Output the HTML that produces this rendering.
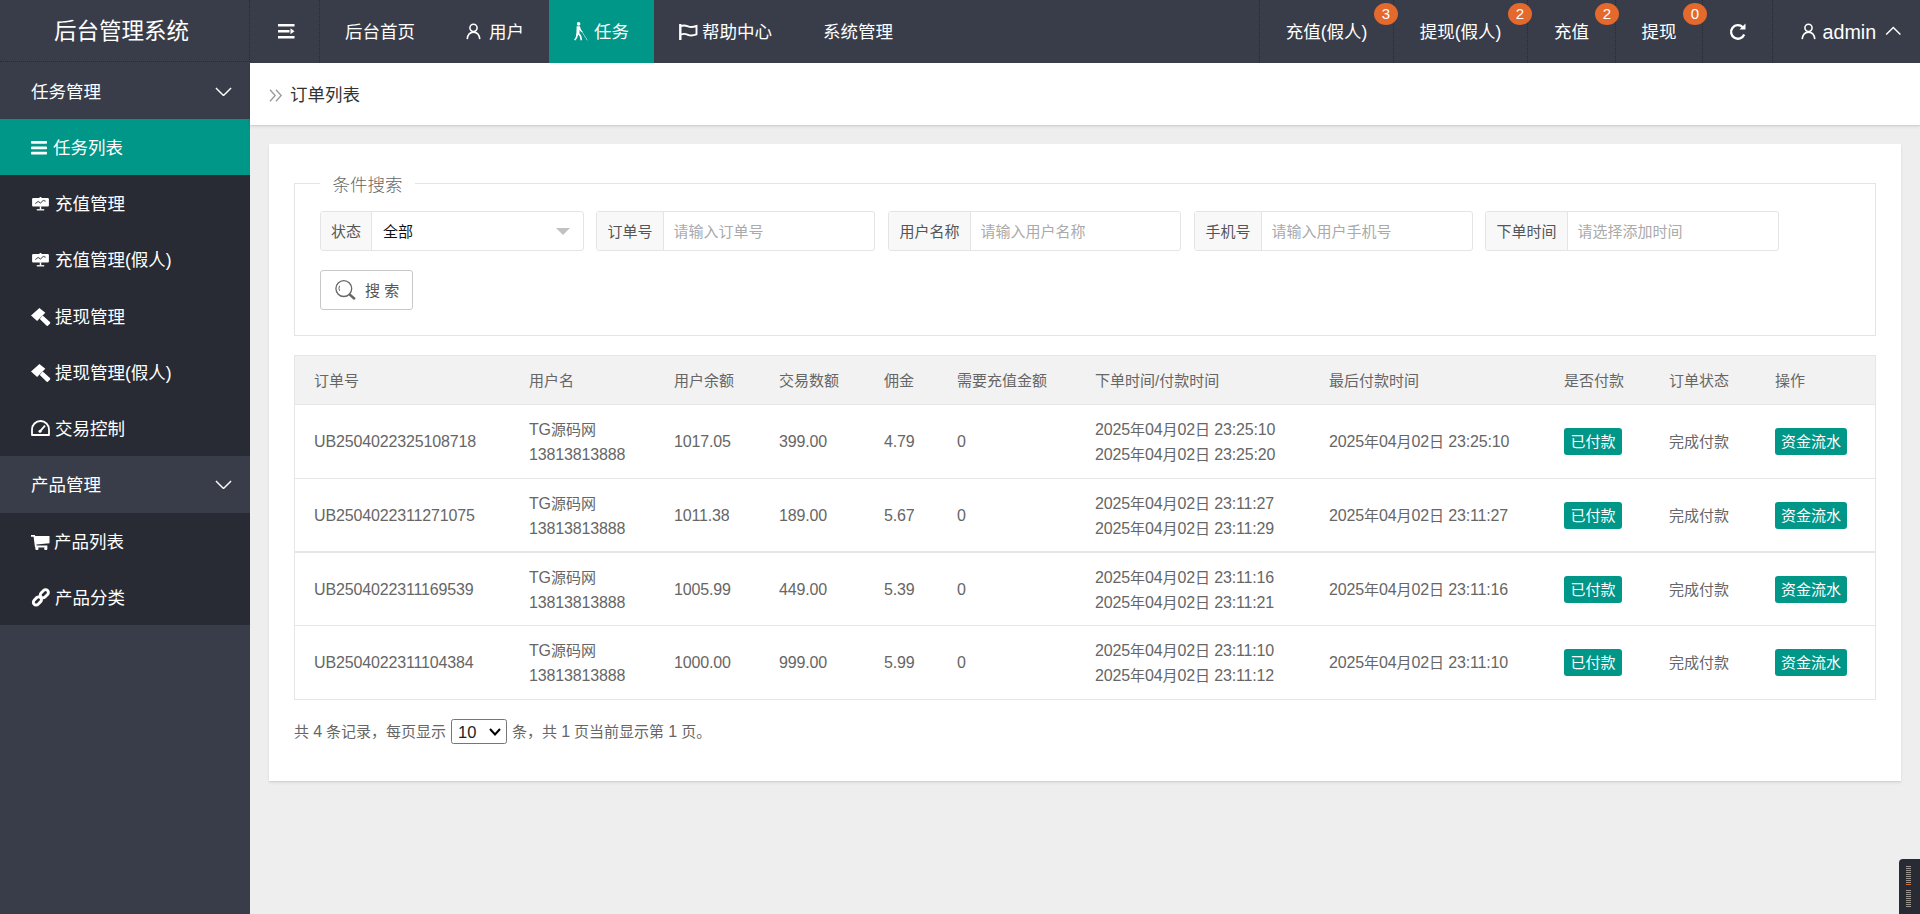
<!DOCTYPE html>
<html lang="zh-CN">
<head>
<meta charset="utf-8">
<title>后台管理系统</title>
<style>
*{box-sizing:border-box;margin:0;padding:0}
html,body{width:1920px;height:914px;overflow:hidden}
body{font-family:"Liberation Sans","Noto Sans CJK SC",sans-serif;background:#eee;color:#333;font-size:17.5px;position:relative}
ul{list-style:none}
svg{display:block}
/* header */
.header{position:absolute;left:0;top:0;width:1920px;height:63px;background:#393D49;color:#fff}
.logo{position:absolute;left:0;top:0;width:250px;height:62px;line-height:64px;padding-left:54px;font-size:22.5px;border-right:1px dotted #272a32;border-bottom:1px dotted #272a32;white-space:nowrap}
.it{position:absolute;top:0;height:63px;line-height:64px;text-align:center;font-size:17.5px;white-space:nowrap}
.it.on{background:#009688}
.it svg{position:absolute}
.it span.t{position:absolute;top:0;white-space:nowrap}
.sep{border-right:1px dotted #272a32}
.sepl{border-left:1px dotted #272a32}
.dot{z-index:2;position:absolute;top:3px;width:24px;height:22px;border-radius:50%;background:#E4692D;color:#fff;font-size:15px;line-height:22px;text-align:center}
/* side */
.side{position:absolute;left:0;top:62px;width:250px;height:852px;background:#393D49;color:#fff}
.grp{position:absolute;left:0;width:250px;height:57px;line-height:60px;padding-left:31px;font-size:17.5px}
.grp svg{position:absolute;left:214.500px;top:24.500px}
.g2{line-height:58px}
.g2 svg{top:23.500px}
.sub{position:absolute;left:0;width:250px;background:#282B33}
.sub li{position:absolute;left:0;width:250px;height:56px;line-height:58px;font-size:17.5px;white-space:nowrap}
.sub li.on{background:#009688}
.sub li svg{position:absolute}
.sub li span{position:absolute;top:0}
/* main */
.crumb{position:absolute;left:250px;top:63px;width:1670px;height:62px;background:#fff;box-shadow:0 2px 3px rgba(0,0,0,.07),0 1px 1px rgba(0,0,0,.06);font-size:17.5px;color:#333}
.crumb svg{position:absolute;left:19px;top:26px}
.crumb span{position:absolute;left:40px;top:0;line-height:64px}
.card{position:absolute;left:269px;top:144px;width:1632px;height:637px;background:#fff;box-shadow:0 2px 3px rgba(0,0,0,.07),0 1px 1px rgba(0,0,0,.05)}
/* form */
.fs{position:absolute;left:294px;top:183px;width:1582px;height:153px;border:1px solid #e4e4e4}
.lg{position:absolute;left:320px;top:170px;width:95px;height:28px;line-height:30px;background:#fff;text-align:center;font-size:17.5px;color:#666;font-weight:300}
.g{position:absolute;top:211px;height:40px;border:1px solid #e4e4e4;border-radius:3px;background:#fff;font-size:15px;overflow:hidden}
.g div{position:absolute;top:0;height:38px;line-height:40px;white-space:nowrap}
.g .lb{left:0;background:#f8f8f8;border-right:1px solid #e4e4e4;text-align:center;color:#555}
.g .ph{color:#aaa}
.g .val{color:#111}
.g .tri{width:0;height:0;border:7.5px solid transparent;border-top-color:#c2c2c2;border-bottom-width:0}
.btn{position:absolute;left:320px;top:270px;width:93px;height:40px;border:1px solid #c9c9c9;border-radius:3px;background:#fff;color:#555;font-size:15px;line-height:40px}
.btn svg{position:absolute;left:14px;top:9px}
.btn span{position:absolute;left:44px;top:0;white-space:nowrap}
/* table */
.tb{position:absolute;left:294px;top:355px;width:1582px;height:345px;border:1px solid #e6e6e6;font-size:15px;color:#666}
.th{position:absolute;left:0;top:0;width:1580px;height:49px;background:#f2f2f2;border-bottom:1px solid #e6e6e6}
.tr{position:absolute;left:0;width:1580px;border-bottom:1px solid #e6e6e6}
.c{position:absolute;white-space:nowrap;line-height:25px}
.n{font-size:16px;letter-spacing:-.15px}
.b{position:absolute;height:27px;line-height:28px;background:#009688;color:#fff;border-radius:3px;text-align:center;font-size:15px}
.pg{position:absolute;left:294px;top:719px;height:25px;line-height:26px;font-size:15px;color:#666;white-space:nowrap}
.sel{position:absolute;left:451px;top:719px;width:56px;height:25px;border:1px solid #767676;border-radius:2.500px;background:#fff;font-size:16.500px;line-height:24px;color:#222;padding-left:6px}
.sel svg{position:absolute;right:5px;top:8px}
/* widget */
.wg{position:absolute;left:1899px;top:859px;width:21px;height:55px;background:#282B33;border-radius:4px 0 0 0}
.wg i{position:absolute;left:7px;width:5px;height:1px;background:#9b9894}
.wg i.o{background:#E4692D}
</style>
</head>
<body>
<div class="side">
<div class="grp" style="top:0">任务管理<svg width="17" height="9.500" viewBox="0 0 18 10" fill="none" stroke="#fff" stroke-width="1.500"><path d="M1 1 9 9 17 1"/></svg></div>
<ul class="sub" style="top:57px;height:337px">
<li class="on" style="top:0px;height:56px"><svg width="16" height="14" viewBox="0 0 16 14" style="left:31px;top:22px" fill="#fff"><rect x="0" y="0" width="16" height="2.800" rx=".800"/><rect x="0" y="5.400" width="16" height="2.800" rx=".800"/><rect x="0" y="10.800" width="16" height="2.800" rx=".800"/></svg><span style="left:53px">任务列表</span></li>
<li style="top:56px;height:56px"><svg width="17" height="14" viewBox="0 0 18 15" style="left:32px;top:22px" fill="#fff"><rect x="8" y="0" width="2" height="2"/><rect x="0" y="1.200" width="18" height="9" rx="1.200"/><rect x="8.200" y="10" width="1.600" height="3.200"/><rect x="5" y="13" width="8" height="1.400"/><path d="M3.500 7 6.500 4.800 9 6.400 12 3.600 14.500 4.600" fill="none" stroke="#282B33" stroke-width="1"/></svg><span style="left:55px">充值管理</span></li>
<li style="top:112px;height:57px"><svg width="17" height="14" viewBox="0 0 18 15" style="left:32px;top:22px" fill="#fff"><rect x="8" y="0" width="2" height="2"/><rect x="0" y="1.200" width="18" height="9" rx="1.200"/><rect x="8.200" y="10" width="1.600" height="3.200"/><rect x="5" y="13" width="8" height="1.400"/><path d="M3.500 7 6.500 4.800 9 6.400 12 3.600 14.500 4.600" fill="none" stroke="#282B33" stroke-width="1"/></svg><span style="left:55px">充值管理(假人)</span></li>
<li style="top:169px;height:56px"><svg width="20" height="19" viewBox="0 0 20 19" style="left:30.7px;top:20px" fill="#fff"><path d="M8.400 0 14.300 4.800 6.100 13 0 7.400z"/><path d="M11.700 7.500 19 14.100Q19.700 14.900 18.900 15.700L16.800 17.700Q16.100 18.300 15.400 17.600L8.800 11z"/></svg><span style="left:55px">提现管理</span></li>
<li style="top:225px;height:56px"><svg width="20" height="19" viewBox="0 0 20 19" style="left:30.7px;top:20px" fill="#fff"><path d="M8.400 0 14.300 4.800 6.100 13 0 7.400z"/><path d="M11.700 7.500 19 14.100Q19.700 14.900 18.900 15.700L16.800 17.700Q16.100 18.300 15.400 17.600L8.800 11z"/></svg><span style="left:55px">提现管理(假人)</span></li>
<li style="top:281px;height:56px"><svg width="19" height="16" viewBox="0 0 19 16" style="left:31px;top:20px" fill="none" stroke="#fff" stroke-width="1.800"><path d="M1 15V9.500a8.500 8.500 0 0 1 17 0V15z" stroke-linejoin="round"/><path d="M9 11.300 14 5.600" stroke-width="1.900"/><circle cx="9" cy="11.300" r="1.500" fill="#fff" stroke="none"/></svg><span style="left:55px">交易控制</span></li>
</ul>
<div class="grp g2" style="top:394px">产品管理<svg width="17" height="9.500" viewBox="0 0 18 10" fill="none" stroke="#fff" stroke-width="1.500"><path d="M1 1 9 9 17 1"/></svg></div>
<ul class="sub" style="top:451px;height:112px">
<li style="top:0px;height:56px"><svg width="19" height="15" viewBox="0 0 19 15" style="left:30.7px;top:22px" fill="#fff"><path d="M0 0h3.800l.500 1H18.500V8.200L5.400 9.600l.200.900H16.400V12.400H4L2.600 1.800H0z"/><rect x="4.300" y="12" width="3.200" height="2.900" rx="1.200"/><rect x="13.200" y="12" width="3.200" height="2.900" rx="1.200"/></svg><span style="left:54px">产品列表</span></li>
<li style="top:56px;height:56px"><svg width="20" height="19" viewBox="0 0 20 19" style="left:30.7px;top:19px" fill="none" stroke="#fff" stroke-width="2.900"><rect x="-4.600" y="-2.800" width="9.200" height="5.600" rx="2.800" transform="translate(13.300 5.700) rotate(-45)"/><rect x="-4.600" y="-2.800" width="9.200" height="5.600" rx="2.800" transform="translate(6.400 12.900) rotate(-45)"/></svg><span style="left:55px">产品分类</span></li>
</ul>
</div>
<div class="header">
<div class="logo">后台管理系统</div>
<div class="it sep" style="left:250px;width:70px"><svg width="18" height="16" viewBox="0 0 18 16" style="left:28px;top:24px" fill="#fff"><rect x="0" y="0" width="16.500" height="2.500"/><rect x="0" y="6" width="11.500" height="2.500"/><rect x="0" y="12" width="16.500" height="2.500"/><path d="M12.500 4.200 16.500 7.250 12.500 10.300z"/></svg></div>
<div class="it " style="left:320px;width:120px">后台首页</div>
<div class="it " style="left:440px;width:109px"><svg width="15" height="16.500" viewBox="0 0 15 17" style="left:26px;top:23px" fill="none" stroke="#fff" stroke-width="1.6"><circle cx="7.5" cy="5" r="3.7"/><path d="M1 16.600C1.600 11.800 4.200 9.400 7.500 9.400s5.900 2.400 6.500 7.200"/></svg><span class="t" style="left:49px">用户</span></div>
<div class="it on" style="left:549px;width:105px"><svg width="15" height="19" viewBox="0 0 15 19" style="left:24px;top:22px" fill="#fff"><circle cx="5.600" cy="1.900" r="1.800"/><path d="M3.600 4.300h3.300l1.500 4.200 1.400 1.200-.600.900-2-1.500-.500-1.300-.300 3.300 2 3 .700 4-1.500.300-.800-3.600L5.200 12.400l-1 3.300-1.800 2.900-1.300-.800 1.700-2.800.600-4.200.200-4.500z"/><path d="M8.300 8.300 14.600 18.300 14.200 18.600 7.900 8.600z"/></svg><span class="t" style="left:45px">任务</span></div>
<div class="it " style="left:654px;width:144px"><svg width="19" height="16" viewBox="0 0 19 16" style="left:25px;top:23.7px" fill="none" stroke="#fff"><path d="M1.300 0v16" stroke-width="2.400"/><path d="M2 2.300c2.600-1.600 4.800-.800 7 .100s4.400 1.100 8.500-.400v8.400c-4.100 1.500-6.300 1.300-8.500.400s-4.400-1.700-7-.100" stroke-width="1.900"/></svg><span class="t" style="left:48px">帮助中心</span></div>
<div class="it " style="left:798px;width:120px">系统管理</div>
<div class="it sepl" style="left:1259px;width:134px">充值(假人)<span class="dot" style="left:114px">3</span></div>
<div class="it sepl" style="left:1393px;width:134px">提现(假人)<span class="dot" style="left:114px">2</span></div>
<div class="it sepl" style="left:1527px;width:88px">充值<span class="dot" style="left:67px">2</span></div>
<div class="it sepl" style="left:1615px;width:87px">提现<span class="dot" style="left:67px">0</span></div>
<div class="it sepl" style="left:1702px;width:70px"><svg width="18" height="18" viewBox="0 0 18 18" style="left:25.500px;top:23px" fill="none" stroke="#fff" stroke-width="2.300"><path d="M15.200 11.500A6.800 6.800 0 1 1 13.800 4.200"/><path d="M10.500 6.500h6v-6z" fill="#fff" stroke="none"/></svg></div>
<div class="it sepl" style="left:1772px;width:148px"><svg width="15" height="16.500" viewBox="0 0 15 17" style="left:27.5px;top:23px" fill="none" stroke="#fff" stroke-width="1.6"><circle cx="7.5" cy="5" r="3.7"/><path d="M1 16.600C1.600 11.800 4.200 9.400 7.500 9.400s5.900 2.400 6.500 7.200"/></svg><span class="t" style="left:49.500px;font-size:19.700px;top:-.500px">admin</span><svg width="16.600" height="9.500" viewBox="0 0 17 10" style="left:111.5px;top:25.5px" fill="none" stroke="#fff" stroke-width="1.500"><path d="M1 9 8.500 1.500 16 9"/></svg></div>
</div>
<div class="crumb"><svg width="14" height="13" viewBox="0 0 14 13" fill="none" stroke="#999" stroke-width="1.300"><path d="M1 .700 6.200 6.500 1 12.300M7 .700 12.200 6.500 7 12.300"/></svg><span>订单列表</span></div>
<div class="card"></div>
<div class="fs"></div>
<div class="lg">条件搜索</div>
<div class="g" style="left:320px;width:264px"><div class="lb" style="width:51px">状态</div><div class="val" style="left:62px">全部</div><div class="tri" style="left:235px;top:16px"></div></div>
<div class="g" style="left:596px;width:279px"><div class="lb" style="width:67px">订单号</div><div class="ph" style="left:76.5px">请输入订单号</div></div>
<div class="g" style="left:888px;width:293px"><div class="lb" style="width:82px">用户名称</div><div class="ph" style="left:91.5px">请输入用户名称</div></div>
<div class="g" style="left:1194px;width:279px"><div class="lb" style="width:67px">手机号</div><div class="ph" style="left:76.5px">请输入用户手机号</div></div>
<div class="g" style="left:1485px;width:294px"><div class="lb" style="width:82px">下单时间</div><div class="ph" style="left:91.5px">请选择添加时间</div></div>
<div class="btn"><svg width="24" height="22" viewBox="0 0 24 22" fill="none" stroke="#666" stroke-width="1.300"><circle cx="8.800" cy="8.600" r="7.900"/><path d="M4.600 5.800a5 5 0 0 0 0 5" stroke-width="1"/><path d="M14.800 14.600 19.200 18.500" stroke-width="2.500" stroke-linecap="round"/></svg><span>搜 索</span></div>
<div class="tb">
<div class="th"><div class="c" style="left:19px;top:12px">订单号</div><div class="c" style="left:234px;top:12px">用户名</div><div class="c" style="left:379px;top:12px">用户余额</div><div class="c" style="left:484px;top:12px">交易数额</div><div class="c" style="left:589px;top:12px">佣金</div><div class="c" style="left:662px;top:12px">需要充值金额</div><div class="c" style="left:800px;top:12px">下单时间/付款时间</div><div class="c" style="left:1034px;top:12px">最后付款时间</div><div class="c" style="left:1269px;top:12px">是否付款</div><div class="c" style="left:1374px;top:12px">订单状态</div><div class="c" style="left:1480px;top:12px">操作</div></div>
<div class="tr" style="top:49px;height:74px"><div class="c" style="left:19px;top:24px"><span class="n">UB2504022325108718</span></div><div class="c" style="left:234px;top:12px"><span class="n">TG</span>源码网<br><span class="n">13813813888</span></div><div class="c" style="left:379px;top:24px"><span class="n">1017.05</span></div><div class="c" style="left:484px;top:24px"><span class="n">399.00</span></div><div class="c" style="left:589px;top:24px"><span class="n">4.79</span></div><div class="c" style="left:662px;top:24px"><span class="n">0</span></div><div class="c" style="left:800px;top:12px"><span class="n">2025</span>年<span class="n">04</span>月<span class="n">02</span>日 <span class="n">23:25:10</span><br><span class="n">2025</span>年<span class="n">04</span>月<span class="n">02</span>日 <span class="n">23:25:20</span></div><div class="c" style="left:1034px;top:24px"><span class="n">2025</span>年<span class="n">04</span>月<span class="n">02</span>日 <span class="n">23:25:10</span></div><div class="b" style="left:1269px;top:23px;width:58px">已付款</div><div class="c" style="left:1374px;top:24px">完成付款</div><div class="b" style="left:1480px;top:23px;width:72px">资金流水</div></div>
<div class="tr" style="top:123px;height:74px;border-bottom-width:2px"><div class="c" style="left:19px;top:24px"><span class="n">UB2504022311271075</span></div><div class="c" style="left:234px;top:12px"><span class="n">TG</span>源码网<br><span class="n">13813813888</span></div><div class="c" style="left:379px;top:24px"><span class="n">1011.38</span></div><div class="c" style="left:484px;top:24px"><span class="n">189.00</span></div><div class="c" style="left:589px;top:24px"><span class="n">5.67</span></div><div class="c" style="left:662px;top:24px"><span class="n">0</span></div><div class="c" style="left:800px;top:12px"><span class="n">2025</span>年<span class="n">04</span>月<span class="n">02</span>日 <span class="n">23:11:27</span><br><span class="n">2025</span>年<span class="n">04</span>月<span class="n">02</span>日 <span class="n">23:11:29</span></div><div class="c" style="left:1034px;top:24px"><span class="n">2025</span>年<span class="n">04</span>月<span class="n">02</span>日 <span class="n">23:11:27</span></div><div class="b" style="left:1269px;top:23px;width:58px">已付款</div><div class="c" style="left:1374px;top:24px">完成付款</div><div class="b" style="left:1480px;top:23px;width:72px">资金流水</div></div>
<div class="tr" style="top:197px;height:73px"><div class="c" style="left:19px;top:24px"><span class="n">UB2504022311169539</span></div><div class="c" style="left:234px;top:12px"><span class="n">TG</span>源码网<br><span class="n">13813813888</span></div><div class="c" style="left:379px;top:24px"><span class="n">1005.99</span></div><div class="c" style="left:484px;top:24px"><span class="n">449.00</span></div><div class="c" style="left:589px;top:24px"><span class="n">5.39</span></div><div class="c" style="left:662px;top:24px"><span class="n">0</span></div><div class="c" style="left:800px;top:12px"><span class="n">2025</span>年<span class="n">04</span>月<span class="n">02</span>日 <span class="n">23:11:16</span><br><span class="n">2025</span>年<span class="n">04</span>月<span class="n">02</span>日 <span class="n">23:11:21</span></div><div class="c" style="left:1034px;top:24px"><span class="n">2025</span>年<span class="n">04</span>月<span class="n">02</span>日 <span class="n">23:11:16</span></div><div class="b" style="left:1269px;top:23px;width:58px">已付款</div><div class="c" style="left:1374px;top:24px">完成付款</div><div class="b" style="left:1480px;top:23px;width:72px">资金流水</div></div>
<div class="tr" style="top:270px;height:74px"><div class="c" style="left:19px;top:24px"><span class="n">UB2504022311104384</span></div><div class="c" style="left:234px;top:12px"><span class="n">TG</span>源码网<br><span class="n">13813813888</span></div><div class="c" style="left:379px;top:24px"><span class="n">1000.00</span></div><div class="c" style="left:484px;top:24px"><span class="n">999.00</span></div><div class="c" style="left:589px;top:24px"><span class="n">5.99</span></div><div class="c" style="left:662px;top:24px"><span class="n">0</span></div><div class="c" style="left:800px;top:12px"><span class="n">2025</span>年<span class="n">04</span>月<span class="n">02</span>日 <span class="n">23:11:10</span><br><span class="n">2025</span>年<span class="n">04</span>月<span class="n">02</span>日 <span class="n">23:11:12</span></div><div class="c" style="left:1034px;top:24px"><span class="n">2025</span>年<span class="n">04</span>月<span class="n">02</span>日 <span class="n">23:11:10</span></div><div class="b" style="left:1269px;top:23px;width:58px">已付款</div><div class="c" style="left:1374px;top:24px">完成付款</div><div class="b" style="left:1480px;top:23px;width:72px">资金流水</div></div>
</div>
<div class="pg">共 <span class="n">4</span> 条记录，每页显示</div>
<div class="sel">10<svg width="12" height="8" viewBox="0 0 12 8" fill="none" stroke="#000" stroke-width="2"><path d="M1 1 6 6.500 11 1"/></svg></div>
<div class="pg" style="left:512px">条，共 <span class="n">1</span> 页当前显示第 <span class="n">1</span> 页。</div>
<div class="wg"><i style="top:7px"></i><i style="top:9px"></i><i style="top:11px"></i><i style="top:13px"></i><i style="top:15px"></i><i style="top:17px"></i><i style="top:19px"></i><i style="top:21px"></i><i style="top:23px"></i><i class="o" style="top:25px"></i><i style="top:31px"></i><i style="top:33px"></i><i style="top:35px"></i><i style="top:37px"></i><i style="top:39px"></i><i style="top:41px"></i><i style="top:43px"></i><i style="top:45px"></i><i style="top:47px"></i></div>
</body>
</html>
